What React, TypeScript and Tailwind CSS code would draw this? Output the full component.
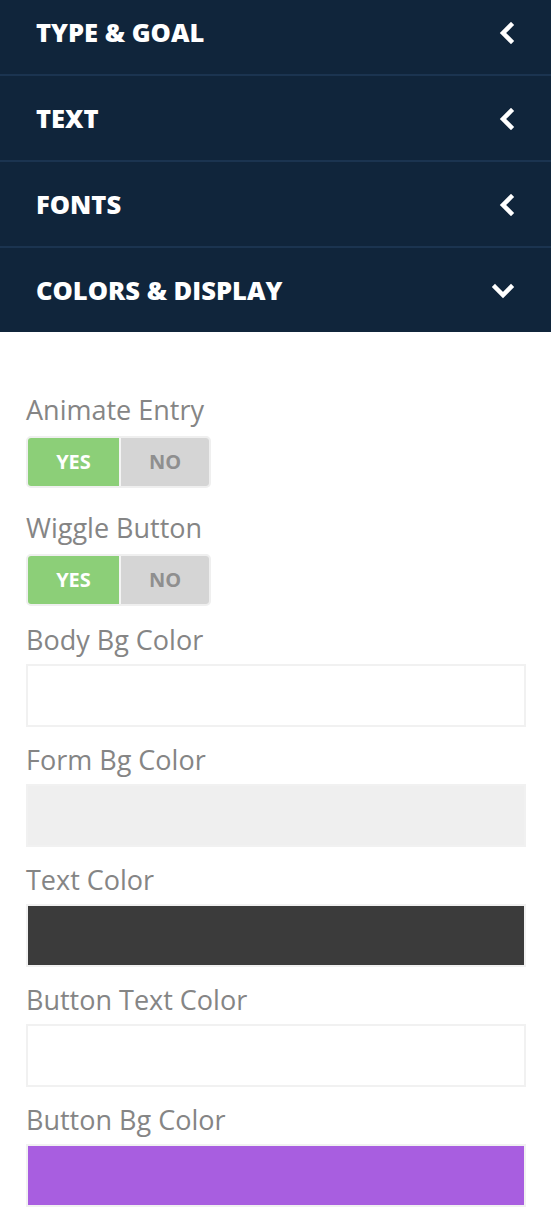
import React from "react"

const sections = ["TYPE & GOAL", "TEXT", "FONTS"]

const ChevronLeft = () => (
  <svg width="16" height="22" viewBox="0 0 16 22" fill="none">
    <polyline points="12,3 4,11 12,19" stroke="white" strokeWidth="4.5" strokeLinejoin="miter" strokeLinecap="square" />
  </svg>
)

const ChevronDown = () => (
  <svg width="24" height="16" viewBox="0 0 24 16" fill="none">
    <polyline points="4,4 12,12 20,4" stroke="white" strokeWidth="4.5" strokeLinejoin="miter" strokeLinecap="square" />
  </svg>
)

// yes / no switch
const Toggle = () => (
  <div className="mt-[10px] flex h-[52px] w-[185px] overflow-hidden rounded-[5px] border-2 border-[#efefef]">
    <div className="flex w-[91px] items-center justify-center bg-[#8ccf78] text-[20px] font-bold text-white">YES</div>
    <div className="w-[2px] bg-[#f4f4f4]"></div>
    <div className="flex flex-1 items-center justify-center bg-[#d5d5d5] text-[20px] font-bold text-[#8f8f8f]">NO</div>
  </div>
)

const Label = ({ text, className }: { text: string; className?: string }) => (
  <p className={`text-[27px] leading-[32px] text-[#858585] ${className ?? ""}`}>{text}</p>
)

const Swatch = ({ color }: { color: string }) => (
  <div className="mt-[8px] h-[63px] w-[500px] border-2 border-[#f1f1f1]" style={{ backgroundColor: color }}></div>
)

export default function App() {
  const swatches = [
    { label: "Body Bg Color", color: "#ffffff" },
    { label: "Form Bg Color", color: "#efefef" },
    { label: "Text Color", color: "#3b3b3b" },
    { label: "Button Text Color", color: "#ffffff" },
    { label: "Button Bg Color", color: "#a85ee0" },
  ]

  return (
    <div className="min-h-screen w-[551px] bg-white" style={{ fontFamily: "'Open Sans', sans-serif" }}>
      {/* accordion headers */}
      <div className="bg-[#10253b]">
        {sections.map((s, i) => (
          <div
            key={s}
            className={`flex items-center justify-between border-b-2 border-[#1b3450] px-[36px] ${
              i === 0 ? "h-[76px] pb-[9px]" : "h-[86px] pt-[1px]"
            }`}
          >
            <p className="text-[25.5px] font-extrabold text-white">{s}</p>
            <ChevronLeft />
          </div>
        ))}
        <div className="flex h-[84px] items-center justify-between pl-[36px] pr-[36px] pt-[1px]">
          <p className="text-[25.5px] font-extrabold text-white">COLORS &amp; DISPLAY</p>
          <ChevronDown />
        </div>
      </div>

      {/* colors & display body */}
      <div className="px-[26px] pt-[62px] pb-[20px]">
        <Label text="Animate Entry" />
        <Toggle />
        <Label text="Wiggle Button" className="mt-[24px]" />
        <Toggle />
        {swatches.map((s, i) => (
          <div key={s.label} className={i === 0 ? "mt-[18px]" : "mt-[17px]"}>
            <Label text={s.label} />
            <Swatch color={s.color} />
          </div>
        ))}
      </div>
    </div>
  )
}
